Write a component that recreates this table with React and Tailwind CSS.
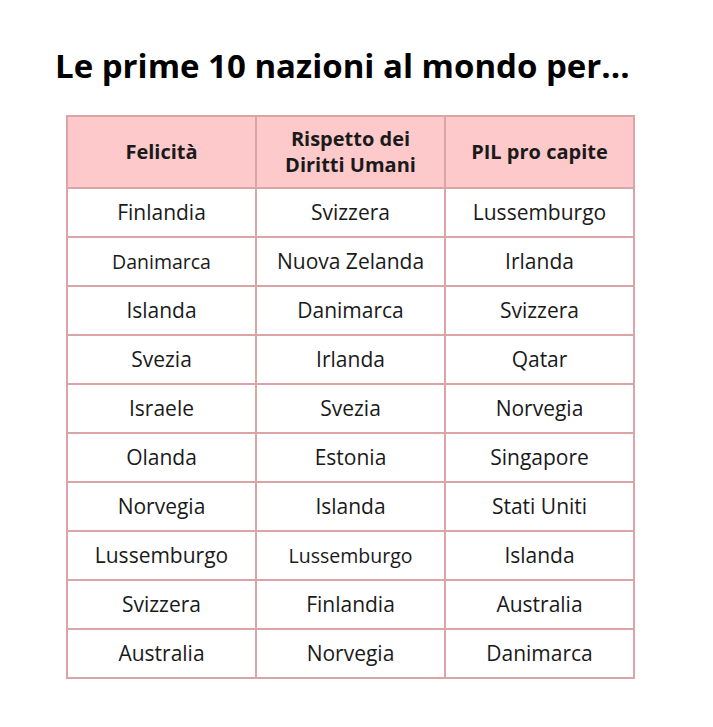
export default function App() {
  const rows = [
    ["Finlandia", "Svizzera", "Lussemburgo"],
    ["Danimarca", "Nuova Zelanda", "Irlanda"],
    ["Islanda", "Danimarca", "Svizzera"],
    ["Svezia", "Irlanda", "Qatar"],
    ["Israele", "Svezia", "Norvegia"],
    ["Olanda", "Estonia", "Singapore"],
    ["Norvegia", "Islanda", "Stati Uniti"],
    ["Lussemburgo", "Lussemburgo", "Islanda"],
    ["Svizzera", "Finlandia", "Australia"],
    ["Australia", "Norvegia", "Danimarca"],
  ];
  const small = (r, c) => (r === 1 && c === 0) || (r === 7 && c === 1);
  return (
    <div className="w-[713px] h-[727px] bg-white text-[#1a1a1a]" style={{ fontFamily: '"Open Sans", sans-serif' }}>
      <div className="pt-[44px] pl-[55px]">
        <h1 className="text-[33px] font-bold leading-[44px] text-black">Le prime 10 nazioni al mondo per...</h1>
      </div>
      <div className="pl-[66px] pt-[27px]">
        <table className="border-collapse w-[568px] table-fixed">
          <thead>
            <tr className="bg-[#fdc9cb] h-[72px]">
              <th className="border-2 border-[#dba4a7] w-[189px] text-[20px] font-bold leading-[26px] text-[#1a1a1a]">Felicità</th>
              <th className="border-2 border-[#dba4a7] w-[189px] text-[20px] font-bold leading-[26px] text-[#1a1a1a]">Rispetto dei<br />Diritti Umani</th>
              <th className="border-2 border-[#dba4a7] w-[189px] text-[20px] font-bold leading-[26px] text-[#1a1a1a]">PIL pro capite</th>
            </tr>
          </thead>
          <tbody>
            {rows.map((r, i) => (
              <tr key={i} className="h-[49px]">
                {r.map((c, j) => (
                  <td key={j} className={`border-2 border-[#dba4a7] text-center ${small(i, j) ? "text-[19.5px]" : "text-[21px]"}`}>{c}</td>
                ))}
              </tr>
            ))}
          </tbody>
        </table>
      </div>
    </div>
  );
}
